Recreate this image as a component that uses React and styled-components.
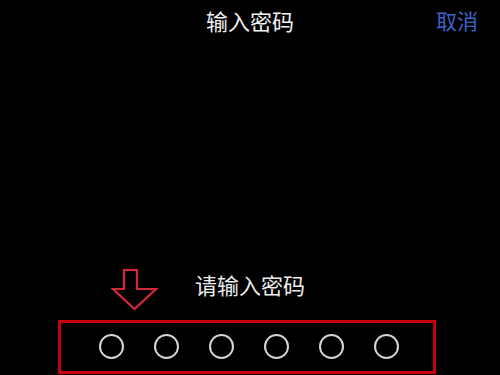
import React from 'react';
import styled, { createGlobalStyle } from 'styled-components';

const GlobalStyle = createGlobalStyle`
  html, body {
    margin: 0;
    padding: 0;
    background: #000;
  }
  body {
    font-family: "Noto Sans CJK SC", "Noto Sans", sans-serif;
  }
`;

const Screen = styled.div`
  width: 500px;
  height: 375px;
  background: #000;
  display: flex;
  flex-direction: column;
  overflow: hidden;
`;

const Header = styled.header`
  height: 40px;
  display: grid;
  grid-template-columns: 1fr auto 1fr;
  align-items: center;
`;

const Title = styled.h1`
  grid-column: 2;
  margin: 0;
  font-size: 22px;
  font-weight: 400;
  color: #f2f2f2;
  line-height: 1;
`;

const Cancel = styled.button`
  grid-column: 3;
  justify-self: end;
  margin-right: 22px;
  padding: 0;
  border: none;
  background: none;
  font-family: inherit;
  font-size: 21px;
  line-height: 1;
  color: #3d63c4;
  cursor: pointer;
`;

const Body = styled.main`
  flex: 1;
  display: flex;
  flex-direction: column;
  justify-content: flex-end;
  position: relative;
`;

const Prompt = styled.p`
  margin: 0 0 24px;
  text-align: center;
  font-size: 22px;
  line-height: 24px;
  color: #ededed;
`;

const PinBox = styled.div`
  box-sizing: border-box;
  width: 378px;
  height: 54px;
  margin: 0 0 1px 58px;
  border: 3px solid #c8000e;
  display: flex;
  align-items: center;
  gap: 30px;
  padding: 0 0 2px 38px;
`;

const Dot = styled.span`
  box-sizing: border-box;
  width: 25px;
  height: 25px;
  border-radius: 50%;
  border: 2px solid ${p => (p.$filled ? '#fff' : '#d6d6d6')};
  background: ${p => (p.$filled ? '#fff' : 'transparent')};
`;

// red callout arrow drawn over the page
const Arrow = styled.svg`
  position: absolute;
  left: 111px;
  bottom: 64px;
  width: 48px;
  height: 42px;
`;

const DownArrow = () => (
  <Arrow viewBox="0 0 48 42">
    <path
      d="M13 1 H26 V20 H45 L23.5 40 L2 20 H13 Z"
      fill="none"
      stroke="#d2283a"
      strokeWidth="2.2"
      strokeLinejoin="miter"
    />
  </Arrow>
);

export default function App() {
  const digits = [false, false, false, false, false, false];
  return (
    <Screen>
      <GlobalStyle />
      <Header>
        <Title>输入密码</Title>
        <Cancel>取消</Cancel>
      </Header>
      <Body>
        <Prompt>请输入密码</Prompt>
        <PinBox>
          {digits.map((f, i) => (
            <Dot key={i} $filled={f} />
          ))}
        </PinBox>
        <DownArrow />
      </Body>
    </Screen>
  );
}
